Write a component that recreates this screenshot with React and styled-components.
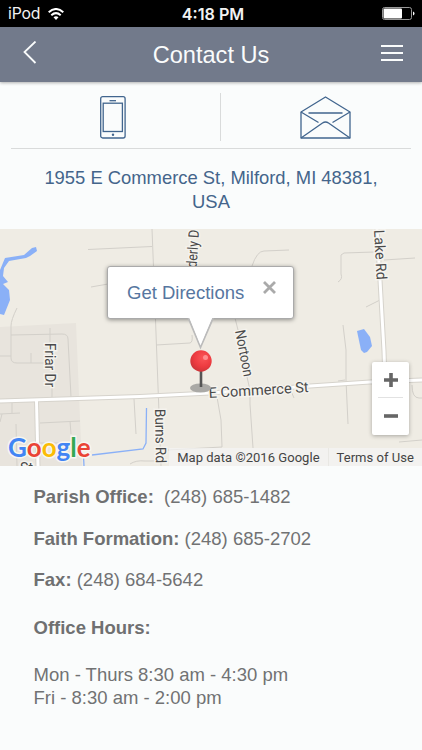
import React from "react";
import styled, { createGlobalStyle, css } from "styled-components";

const GlobalStyle = createGlobalStyle`
  * {
    box-sizing: border-box;
  }
  body {
    margin: 0;
    background: #fafcfc;
    font-family: "Liberation Sans", Arial, sans-serif;
  }
  button {
    padding: 0;
    border: 0;
    background: none;
    font: inherit;
  }
  svg {
    display: block;
  }
`;

const Screen = styled.div`
  display: flex;
  flex-direction: column;
  height: 750px;
  overflow: hidden;
  background: #fafcfc;
`;

const StatusBar = styled.div`
  display: grid;
  grid-template-columns: 1fr auto 1fr;
  align-items: center;
  flex: none;
  height: 27px;
  padding: 0 8px;
  background: #000;
  color: #f2f2f2;
  font-family: Inter, sans-serif;
  font-size: 15.8px;
`;

const Carrier = styled.div`
  display: flex;
  align-items: center;
  gap: 8px;
  letter-spacing: -0.2px;
`;

const Clock = styled.div`
  padding-left: 4px;
  font-weight: 600;
  font-size: 16.2px;
`;

const Battery = styled.div`
  justify-self: end;
  margin-right: -1px;
`;

const Header = styled.header`
  display: grid;
  grid-template-columns: 60px 1fr 60px;
  align-items: center;
  flex: none;
  height: 55px;
  background: #727a8b;
  color: #fafcfc;
  box-shadow: 0 1px 3px rgba(0, 0, 0, 0.3);
  z-index: 1;
`;

const Title = styled.h1`
  margin: 0;
  text-align: center;
  font-size: 23.6px;
  line-height: 28px;
  font-weight: 400;
`;

const HeaderButton = styled.button`
  display: flex;
  justify-content: center;
  padding-bottom: ${({ $lift }) => $lift || 0}px;
  color: inherit;
`;

const Actions = styled.div`
  display: flex;
  flex: none;
  height: 67px;
  margin: 0 11px;
  padding-top: 11px;
  border-bottom: 1px solid #d9dbdb;
`;

const Action = styled.button`
  display: flex;
  justify-content: center;
  width: 209px;
  height: 48px;
  padding: 3px 5px 0 0;
  color: #41658e;

  & + & {
    width: 191px;
    padding: 3px 0 0 18px;
    border-left: 1px solid #d9dbdb;
  }
`;

const Address = styled.div`
  flex: none;
  height: 80px;
  padding-top: 17px;
  text-align: center;
  color: #44658b;
  font-size: 18.4px;
  line-height: 24px;
`;

const MapArea = styled.div`
  position: relative;
  flex: none;
  height: 237px;
  overflow: hidden;
  background: #efece4;
`;

const InfoWindow = styled.div`
  position: absolute;
  left: 107px;
  top: 37px;
  display: flex;
  justify-content: space-between;
  width: 187px;
  height: 53px;
  padding: 14px 17px 0 19px;
  border: 1px solid #aaa;
  border-radius: 3px;
  background: #fff;
  box-shadow: 0 1px 4px rgba(0, 0, 0, 0.4);
`;

const InfoLink = styled.a`
  color: #5676a0;
  font-size: 18.5px;
  line-height: 23px;
`;

const Zoom = styled.div`
  position: absolute;
  left: 372px;
  top: 133px;
  width: 37px;
  height: 73px;
  border-radius: 2px;
  background: #fff;
  box-shadow: 0 1px 4px rgba(0, 0, 0, 0.3);
`;

const ZoomButton = styled.button`
  display: flex;
  align-items: center;
  justify-content: center;
  width: 25px;
  height: 36px;
  margin: 0 6px;
  color: #666;

  ${({ $divided }) =>
    $divided &&
    css`
      border-bottom: 1px solid #e2e2e2;
    `}
`;

const Credits = styled.div`
  position: absolute;
  right: 0;
  bottom: 0;
  display: flex;
  height: 18px;
  color: #444;
  font-family: Roboto, sans-serif;
  font-size: 13px;
  line-height: 19px;
  letter-spacing: 0.04px;
  white-space: nowrap;
`;

const Credit = styled.span`
  padding: 0 8px;
  background: rgba(245, 245, 245, 0.7);

  & + & {
    border-left: 1px solid #e9e8e4;
  }
`;

const Details = styled.div`
  padding: 20px 33.5px;
  color: #717273;
  font-size: 18.5px;
  line-height: 22.5px;
  white-space: pre;

  p {
    margin: 0 0 19px;
  }
  b {
    color: #6f7071;
  }
`;

const Hours = styled.div`
  padding-top: 6px;

  p {
    margin: 0 0 25px;
  }
`;

const minorRoads = [
  "M88 249.5 L152 246.5",
  "M91 287 L108 284",
  "M152 229 L154 280 L157 360 L161 466",
  "M156 345 L190 343 Q193 342 192 335",
  "M252 266 Q257 251 264 251 L289 250",
  "M235 318 L238 330 M247 377 L250 390 L250 404 L253 448",
  "M217 397 L221 420 L222 447 L168 450",
  "M17 308 Q11 320 11 326 L11 358 Q11 363 17 363 L50 363 M11 335 L62 334 Q68 334 68 339 L71 397",
  "M0 356 L11 356 M31 353 L31 363 M50 328 L50 342 M52 388 L52 397",
  "M12 402 L12 413 M0 414 L20 413 M2 414 L0 422 M16 424 L17 466",
  "M40 423 L80 421 M70 421 L71 434 M40 443 L71 443",
  "M134 399 L136 434 M130 464 Q136 460 145 461 L158 461",
  "M338 282 Q343 279 341 274 L341 255 L344 253 L374 252 M384 260 L415 258",
  "M366 307 L380 300",
  "M343 325 L346 350 L346 380 L348 424 M338 381 L345 380",
  "M291 391 L294 398 M412 385 Q412 398 419 398 L422 398 M399 442 L422 440",
];

const mainRoads = [
  "M377 229 L380 280 L384 351 L385 382",
  "M0 401 L140 396.5 L210 393 L310 386 L370 382 L422 380",
  "M36.5 400 L38 466",
];

const mapLabels = [
  { text: "Friar Dr", x: 45, y: 343, angle: 90, length: 44 },
  { text: "Burns Rd", x: 155, y: 409, angle: 89, length: 54 },
  { text: "derly D", x: 196.5, y: 268, angle: -86, length: 38 },
  { text: "Nortoon", x: 235, y: 331, angle: 79, length: 47 },
  { text: "Lake Rd", x: 374, y: 230, angle: 87, length: 50 },
  { text: "E Commerce St", x: 209, y: 398, angle: -3.4, length: 100 },
  { text: "St", x: 20, y: 473, angle: 0, length: 13 },
];

const logoLetters = [
  ["G", "#4285f4"],
  ["o", "#ea4335"],
  ["o", "#fbbc05"],
  ["g", "#4285f4"],
  ["l", "#34a853"],
  ["e", "#ea4335"],
];

const WifiIcon = () => (
  <svg width="16" height="12" viewBox="0 0 16 12" fill="none" stroke="#fff" strokeWidth="2">
    <path d="M0.7 4.2 Q8 -2.2 15.3 4.2" />
    <path d="M3.3 7.2 Q8 3 12.7 7.2" />
    <path d="M5.5 9.3 Q8 7.2 10.5 9.3 L8 12 Z" fill="#fff" stroke="none" />
  </svg>
);

const BatteryIcon = () => (
  <svg width="33" height="13" viewBox="0 0 33 13">
    <rect x="0.5" y="0.5" width="29" height="12" rx="2" fill="none" stroke="#999" />
    <rect x="1.5" y="1.5" width="18.5" height="10" rx="1" fill="#fff" />
    <path d="M31 4.5 Q32.5 5 32.5 6.5 Q32.5 8 31 8.5 Z" fill="#fff" />
  </svg>
);

const PhoneIcon = () => (
  <svg width="26" height="43" viewBox="0 0 26 43" fill="none" stroke="currentColor" strokeWidth="1.3">
    <rect x="0.7" y="0.7" width="24.4" height="41.3" rx="2" />
    <rect x="3.2" y="7.2" width="19.2" height="28.3" />
    <path d="M9.5 4.7 H16" />
    <circle cx="13" cy="38.8" r="1.2" fill="currentColor" stroke="none" />
  </svg>
);

const MailIcon = () => (
  <svg
    width="51"
    height="43"
    viewBox="0 0 51 43"
    fill="none"
    stroke="currentColor"
    strokeWidth="1.3"
    strokeLinejoin="round"
  >
    <path d="M1 16 L25.5 1 L50 16 V42 H1 Z" />
    <path d="M1 16 L18.5 26.5 M50 16 L32.5 26.5" />
    <path d="M1 42 L22.5 27 Q25.5 25 28.5 27 L50 42" />
    <path d="M8.5 17 H42.5" />
  </svg>
);

const StreetMap = () => (
  <svg width="422" height="237" viewBox="0 229 422 237">
    <path d="M0 327 L76 323 L82 466 L0 466 Z" fill="#e8e4dd" />
    <g fill="none" stroke="#d3d0ca" strokeWidth="1">
      {minorRoads.map((d) => (
        <path key={d} d={d} />
      ))}
    </g>
    <g fill="#8ab0f7">
      <path d="M0 270 L5 258 L24 255 L32 248 L36 247 L37 251 L30 256 L26 258 L9 261 L4 268 L3 276 L8 282 L3 284 L9 290 L10 300 L4 315 L0 314 Z" />
      <path d="M357 331 L364 329 L370 337 L372 346 L367 352 L364 353 L361 350 Z" />
    </g>
    <path
      d="M146.5 408 L146 443 L143 449 L92 455 M83.5 456 L84 466"
      fill="none"
      stroke="#8ab0f7"
      strokeWidth="1.3"
    />
    <g fill="none" stroke="#d6d3cc" strokeWidth="5">
      {mainRoads.map((d) => (
        <path key={d} d={d} />
      ))}
    </g>
    <g fill="none" stroke="#fff" strokeWidth="3">
      {mainRoads.map((d) => (
        <path key={d} d={d} />
      ))}
    </g>
    <g
      fill="#4a4a4a"
      stroke="#f5f3ee"
      strokeWidth="3"
      paintOrder="stroke"
      fontFamily="Roboto, sans-serif"
      fontSize="14.5"
    >
      {mapLabels.map(({ text, x, y, angle, length }) => (
        <text
          key={text}
          transform={`translate(${x} ${y}) rotate(${angle})`}
          textLength={length}
          lengthAdjust="spacingAndGlyphs"
        >
          {text}
        </text>
      ))}
    </g>
    <text
      x="8"
      y="456.5"
      textLength="82.5"
      lengthAdjust="spacingAndGlyphs"
      fontFamily="Lato, sans-serif"
      fontWeight="700"
      fontSize="27"
      stroke="#f7f6f2"
      strokeWidth="3"
      paintOrder="stroke"
    >
      {logoLetters.map(([letter, color], i) => (
        <tspan key={i} fill={color}>
          {letter}
        </tspan>
      ))}
    </text>
  </svg>
);

const PinIcon = styled.svg`
  position: absolute;
  left: 187px;
  top: 86px;
`;

const Pin = () => (
  <PinIcon width="30" height="80" viewBox="187 315 30 80">
    <defs>
      <radialGradient id="pinHead" cx="0.6" cy="0.35" r="0.7">
        <stop offset="0" stopColor="#fb5557" />
        <stop offset="0.6" stopColor="#ed3b40" />
        <stop offset="1" stopColor="#c93438" />
      </radialGradient>
    </defs>
    <ellipse cx="200.5" cy="388" rx="10.5" ry="4.5" fill="#aaa9a6" />
    <path d="M188.5 318 L200.5 347 L213 318" fill="#fff" stroke="#bbb" strokeWidth="2" />
    <path d="M189 317 L200.5 345.5 L212.5 317 Z" fill="#fff" />
    <path d="M188 315 H214 V318 H188 Z" fill="#fff" />
    <path d="M201 371 V387" stroke="#555" strokeWidth="2.6" />
    <circle cx="201" cy="361" r="10.7" fill="url(#pinHead)" />
    <circle cx="205.5" cy="357.5" r="2.5" fill="#ff8d8e" />
  </PinIcon>
);

const App = () => {
  return (
    <Screen>
      <GlobalStyle />
      <StatusBar>
        <Carrier>
          iPod
          <WifiIcon />
        </Carrier>
        <Clock>4:18 PM</Clock>
        <Battery>
          <BatteryIcon />
        </Battery>
      </StatusBar>

      <Header>
        <HeaderButton $lift={5} aria-label="Back">
          <svg width="14" height="23" viewBox="0 0 14 23" fill="none" stroke="currentColor" strokeWidth="1.8">
            <path d="M12.5 0.5 L1.5 11 L12.5 22" />
          </svg>
        </HeaderButton>
        <Title>Contact Us</Title>
        <HeaderButton $lift={3} aria-label="Menu">
          <svg width="22" height="18" viewBox="0 0 22 18" stroke="currentColor" strokeWidth="2">
            <path d="M0 2 H22 M0 9 H22 M0 16 H22" />
          </svg>
        </HeaderButton>
      </Header>

      <Actions>
        <Action aria-label="Call">
          <PhoneIcon />
        </Action>
        <Action aria-label="Email">
          <MailIcon />
        </Action>
      </Actions>

      <Address>
        1955 E Commerce St, Milford, MI 48381,
        <br />
        USA
      </Address>

      <MapArea>
        <StreetMap />
        <InfoWindow>
          <InfoLink>Get Directions</InfoLink>
          <svg width="13" height="13" viewBox="0 0 13 13" stroke="#aaa" strokeWidth="2.8">
            <path d="M1 1 L12 12 M12 1 L1 12" />
          </svg>
        </InfoWindow>
        <Pin />
        <Zoom>
          <ZoomButton $divided aria-label="Zoom in">
            <svg width="14" height="14" stroke="currentColor" strokeWidth="3.6">
              <path d="M0 7 H14 M7 0 V14" />
            </svg>
          </ZoomButton>
          <ZoomButton aria-label="Zoom out">
            <svg width="14" height="14" stroke="currentColor" strokeWidth="3.6">
              <path d="M0 7 H14" />
            </svg>
          </ZoomButton>
        </Zoom>
        <Credits>
          <Credit>Map data ©2016 Google</Credit>
          <Credit>Terms of Use</Credit>
        </Credits>
      </MapArea>

      <Details>
        <p>
          <b>Parish Office:</b>
          {"  (248) 685-1482"}
        </p>
        <p>
          <b>Faith Formation:</b>
          {" (248) 685-2702"}
        </p>
        <p>
          <b>Fax:</b>
          {" (248) 684-5642"}
        </p>
        <Hours>
          <p>
            <b>Office Hours:</b>
          </p>
          <div>Mon - Thurs 8:30 am - 4:30 pm</div>
          <div>Fri - 8:30 am - 2:00 pm</div>
        </Hours>
      </Details>
    </Screen>
  );
};

export default App;
